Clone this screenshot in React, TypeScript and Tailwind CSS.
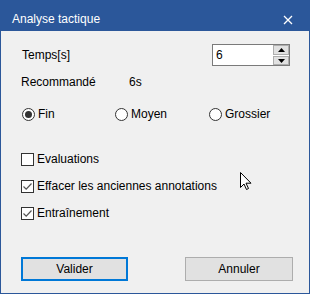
import type { ReactNode } from 'react'

const font = { fontFamily: '"Liberation Sans", Arial, sans-serif' }

function Radio({ checked, label }: { checked?: boolean; label: string }) {
  return (
    <div className="flex items-center gap-[3px]">
      <span className="flex h-[13px] w-[13px] items-center justify-center rounded-full border border-[#333] bg-white">
        {checked && <span className="h-[7px] w-[7px] rounded-full bg-[#333]" />}
      </span>
      <span>{label}</span>
    </div>
  )
}

function Check({ checked, children }: { checked?: boolean; children: ReactNode }) {
  return (
    <div className="flex h-[16px] items-center gap-[3px]">
      <span className="flex h-[13px] w-[13px] items-center justify-center border border-[#333] bg-white">
        {checked && (
          <svg width="11" height="11" viewBox="0 0 11 11">
            <path d="M1.5 5.5 L4.2 8.2 L9.5 2.5" fill="none" stroke="#555" strokeWidth="1.2" />
          </svg>
        )}
      </span>
      <span>{children}</span>
    </div>
  )
}

export default function App() {
  return (
    <div
      style={font}
      className="relative flex h-[294px] w-[310px] flex-col border border-[#2b579a] bg-[#f0f0f0] text-[12px] text-black"
    >
      <div className="flex h-[30px] shrink-0 items-start justify-between bg-[#2b579a] pl-[11px] pr-[16px] pt-[10px] text-white">
        <span className="leading-[16px]">Analyse tactique</span>
        <svg width="10" height="10" viewBox="0 0 10 10" className="mt-[4px]">
          <path d="M1 1 L9 9 M9 1 L1 9" stroke="white" strokeWidth="1.3" />
        </svg>
      </div>

      <div className="flex flex-col pl-[19px]">
        <div className="mt-[13px] flex h-[22px] items-center justify-between pr-[19px]">
          <span className="pl-[2px]">Temps[s]</span>
          <div className="flex h-[22px] w-[78px] border border-[#7a7a7a] bg-white">
            <span className="flex-1 pl-[3px] leading-[20px]">6</span>
            <div className="flex w-[16px] flex-col gap-[1px] py-[0px]">
              <div className="flex h-[10px] items-center justify-center border border-[#adadad] bg-[#e1e1e1]">
                <svg width="7" height="4" viewBox="0 0 7 4">
                  <path d="M0 4 L3.5 0 L7 4 Z" fill="#000" />
                </svg>
              </div>
              <div className="flex h-[9px] items-center justify-center border border-[#adadad] bg-[#e1e1e1]">
                <svg width="7" height="4" viewBox="0 0 7 4">
                  <path d="M0 0 L3.5 4 L7 0 Z" fill="#000" />
                </svg>
              </div>
            </div>
          </div>
        </div>

        <div className="mt-[8px] flex h-[16px] items-center">
          <span className="w-[109px] pl-[1px]">Recommandé</span>
          <span>6s</span>
        </div>

        <div className="mt-[16px] flex h-[16px] items-center pl-[2px]">
          <div className="w-[93px]">
            <Radio checked label="Fin" />
          </div>
          <div className="w-[94px]">
            <Radio label="Moyen" />
          </div>
          <Radio label="Grossier" />
        </div>

        <div className="mt-[29px] flex flex-col gap-[11px] pl-[1px]">
          <Check>Evaluations</Check>
          <Check checked>Effacer les anciennes annotations</Check>
          <Check checked>Entraînement</Check>
        </div>

        <div className="mt-[36px] flex items-center justify-between pl-[1px] pr-[16px]">
          <button className="h-[24px] w-[107px] border-2 border-[#0078d7] bg-[#e1e1e1]">Valider</button>
          <button className="h-[24px] w-[108px] border border-[#adadad] bg-[#e1e1e1]">Annuler</button>
        </div>
      </div>

      <svg
        width="13"
        height="19"
        viewBox="0 0 13 19"
        className="absolute left-[239px] top-[171px]"
      >
        <path d="M0.5 0.5 L0.5 15.5 L4 12 L6.5 17.5 L8.5 16.5 L6 11.2 L11 11.2 Z" fill="white" stroke="black" strokeWidth="1" strokeLinejoin="miter" />
      </svg>
    </div>
  )
}
